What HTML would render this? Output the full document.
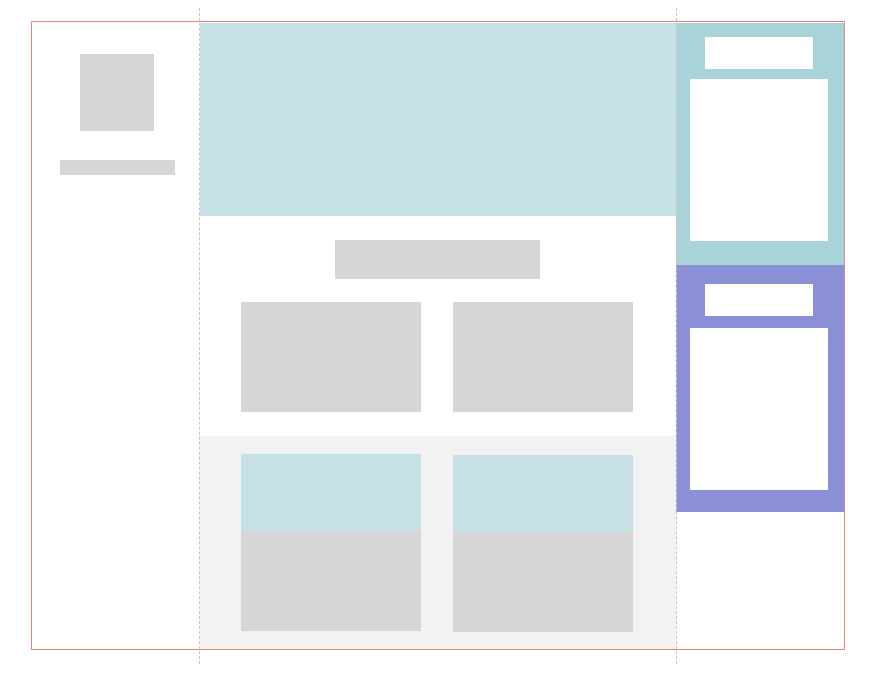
<!DOCTYPE html>
<html><head><style>
*{margin:0;padding:0}
body{width:886px;height:678px;background:#fff;position:relative;overflow:hidden}
div{position:absolute}
.g{background:#d6d6d6}
.w{background:#fff}
.dl{border-left:1px dashed #e3b8b8;width:0;top:8px;height:656px}
</style></head><body>
<div style="left:200px;top:23px;width:476px;height:193px;background:#c7e2e7"></div>
<div style="left:200px;top:436px;width:476px;height:214px;background:#f2f2f2"></div>
<div class="g" style="left:80px;top:54px;width:74px;height:77px"></div>
<div class="g" style="left:60px;top:160px;width:115px;height:15px"></div>
<div class="g" style="left:335px;top:240px;width:205px;height:39px"></div>
<div class="g" style="left:241px;top:302px;width:180px;height:110px"></div>
<div class="g" style="left:453px;top:302px;width:180px;height:110px"></div>
<div class="g" style="left:241px;top:454px;width:180px;height:177px"></div>
<div style="left:241px;top:454px;width:180px;height:77px;background:#c7e2e7"></div>
<div class="g" style="left:453px;top:455px;width:180px;height:177px"></div>
<div style="left:453px;top:455px;width:180px;height:77px;background:#c7e2e7"></div>
<div style="left:676px;top:23px;width:168px;height:242px;background:#a8d3d9"></div>
<div class="w" style="left:705px;top:37px;width:108px;height:32px"></div>
<div class="w" style="left:690px;top:79px;width:138px;height:162px"></div>
<div style="left:676px;top:265px;width:168px;height:247px;background:#8a8fd6"></div>
<div class="w" style="left:705px;top:284px;width:108px;height:32px"></div>
<div class="w" style="left:690px;top:328px;width:138px;height:162px"></div>
<div style="left:31px;top:21px;width:812px;height:627px;border:1px solid #e6847b"></div>
<div class="dl" style="left:199px"></div>
<div class="dl" style="left:676px"></div>
</body></html>
